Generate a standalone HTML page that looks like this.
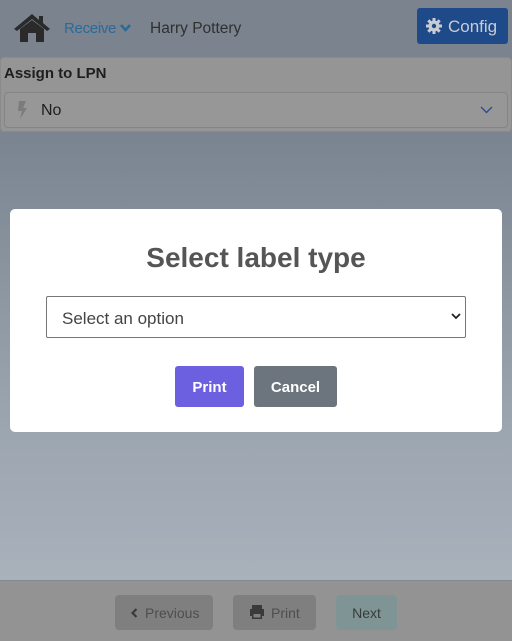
<!DOCTYPE html>
<html><head><style>
*{box-sizing:border-box;margin:0;padding:0}
body{width:512px;height:641px;overflow:hidden;position:relative;font-family:"Liberation Sans",sans-serif;background:linear-gradient(#76808c 0px,#7a8591 140px,#99a3ae 400px,#a9b1bb 580px)}
.hdr{position:absolute;left:0;top:0;width:512px;height:57px;background:#7a838e}
.abs{position:absolute}
</style></head><body>
<div class="hdr"></div>
<svg class="abs" style="left:13px;top:13px" width="38" height="30" viewBox="0 0 38 30"><path d="M19 1 L1 16 L4 18 L19 6 L34 18 L37 16 L30 10 L30 3 L26 3 L26 7 Z" fill="#2a2a2a"/><path d="M7 16 L19 7 L31 16 L31 29 L23 29 L23 20 L15 20 L15 29 L7 29 Z" fill="#2a2a2a"/></svg>
<div class="abs" style="left:64px;top:20px;font-size:15px;color:#2a6a99;letter-spacing:-0.3px">Receive</div>
<svg class="abs" style="left:120px;top:24px" width="11" height="8"><path d="M1 1 L5.5 6 L10 1" stroke="#2a6a99" stroke-width="2.5" fill="none"/></svg>
<div class="abs" style="left:150px;top:20px;font-size:15.5px;color:#303030">Harry Pottery</div>
<div class="abs" style="left:417px;top:8px;width:91px;height:36px;background:#1f4a8a;border-radius:3px"></div>
<svg class="abs" style="left:426px;top:18px" width="16" height="16" viewBox="0 0 16 16"><circle cx="8" cy="8" r="5.5" fill="#c8cdd4"/><g stroke="#c8cdd4" stroke-width="3"><path d="M8 0v16M0 8h16M2.3 2.3l11.4 11.4M13.7 2.3L2.3 13.7"/></g><circle cx="8" cy="8" r="2.2" fill="#1f4a8a"/></svg>
<div class="abs" style="left:448px;top:17px;font-size:17px;color:#c8cdd4">Config</div>
<div class="abs" style="left:0;top:57px;width:512px;height:75px;background:#959595;border-radius:4px;border:1px solid #8a8a8a"></div>
<div class="abs" style="left:4px;top:65px;font-size:15px;font-weight:bold;color:#1e1e1e">Assign to LPN</div>
<div class="abs" style="left:4px;top:92px;width:504px;height:36px;border:1px solid #858585;border-radius:4px;background:#979797"></div>
<svg class="abs" style="left:16px;top:101px" width="12" height="18"><path d="M3 0h7l-3 7h4L4 18l2-8H2z" fill="#7c7c7c"/></svg>
<div class="abs" style="left:41px;top:102px;font-size:16px;color:#1e1e1e">No</div>
<svg class="abs" style="left:480px;top:106px" width="13" height="8"><path d="M1 1l5.5 5.5L12 1" stroke="#2a4a88" stroke-width="1.3" fill="none"/></svg>
<div class="abs" style="left:0;top:580px;width:512px;height:61px;background:#939393;border-top:1px solid #858a8f"></div>
<div class="abs" style="left:115px;top:595px;width:98px;height:35px;background:#7f7f7f;border-radius:4px;color:#4e4e4e;font-size:14px;line-height:36px;padding-left:30px">Previous</div>
<svg class="abs" style="left:131px;top:608px" width="7" height="10"><path d="M5.5 1L1.5 5l4 4" stroke="#3a3a3a" stroke-width="2.2" fill="none"/></svg>
<div class="abs" style="left:233px;top:595px;width:83px;height:35px;background:#7f7f7f;border-radius:4px;color:#4e4e4e;font-size:14px;line-height:36px;padding-left:38px">Print</div>
<svg class="abs" style="left:249px;top:604px" width="16" height="16" viewBox="0 0 16 16"><path d="M3 1h10v4H3z M1 5h14v7h-2v3H3v-3H1z" fill="#3a3a3a"/><rect x="4.5" y="10" width="7" height="3.5" fill="#7f7f7f"/></svg>
<div class="abs" style="left:336px;top:595px;width:61px;height:35px;background:#7f9595;border-radius:4px;color:#3a3a3a;font-size:14px;line-height:36px;text-align:center">Next</div>
<div class="abs" style="left:10px;top:209px;width:492px;height:223px;background:#fff;border-radius:5px"></div>
<div class="abs" style="left:10px;top:242px;width:492px;text-align:center;font-size:28px;font-weight:bold;color:#555">Select label type</div>
<div class="abs" style="left:46px;top:296px;width:420px;height:42px;border:1px solid #777;border-radius:2px;font-size:17px;color:#444;line-height:43px;padding-left:15px">Select an option</div>
<svg class="abs" style="left:451px;top:313px" width="10" height="7"><path d="M1 1l4 4 4-4" stroke="#222" stroke-width="1.8" fill="none"/></svg>
<div class="abs" style="left:175px;top:366px;width:69px;height:41px;background:#6c5fe0;border-radius:3px;color:#fff;font-size:15px;font-weight:bold;line-height:43px;text-align:center">Print</div>
<div class="abs" style="left:254px;top:366px;width:83px;height:41px;background:#6c757d;border-radius:3px;color:#fff;font-size:15px;font-weight:bold;line-height:43px;text-align:center">Cancel</div>
</body></html>
